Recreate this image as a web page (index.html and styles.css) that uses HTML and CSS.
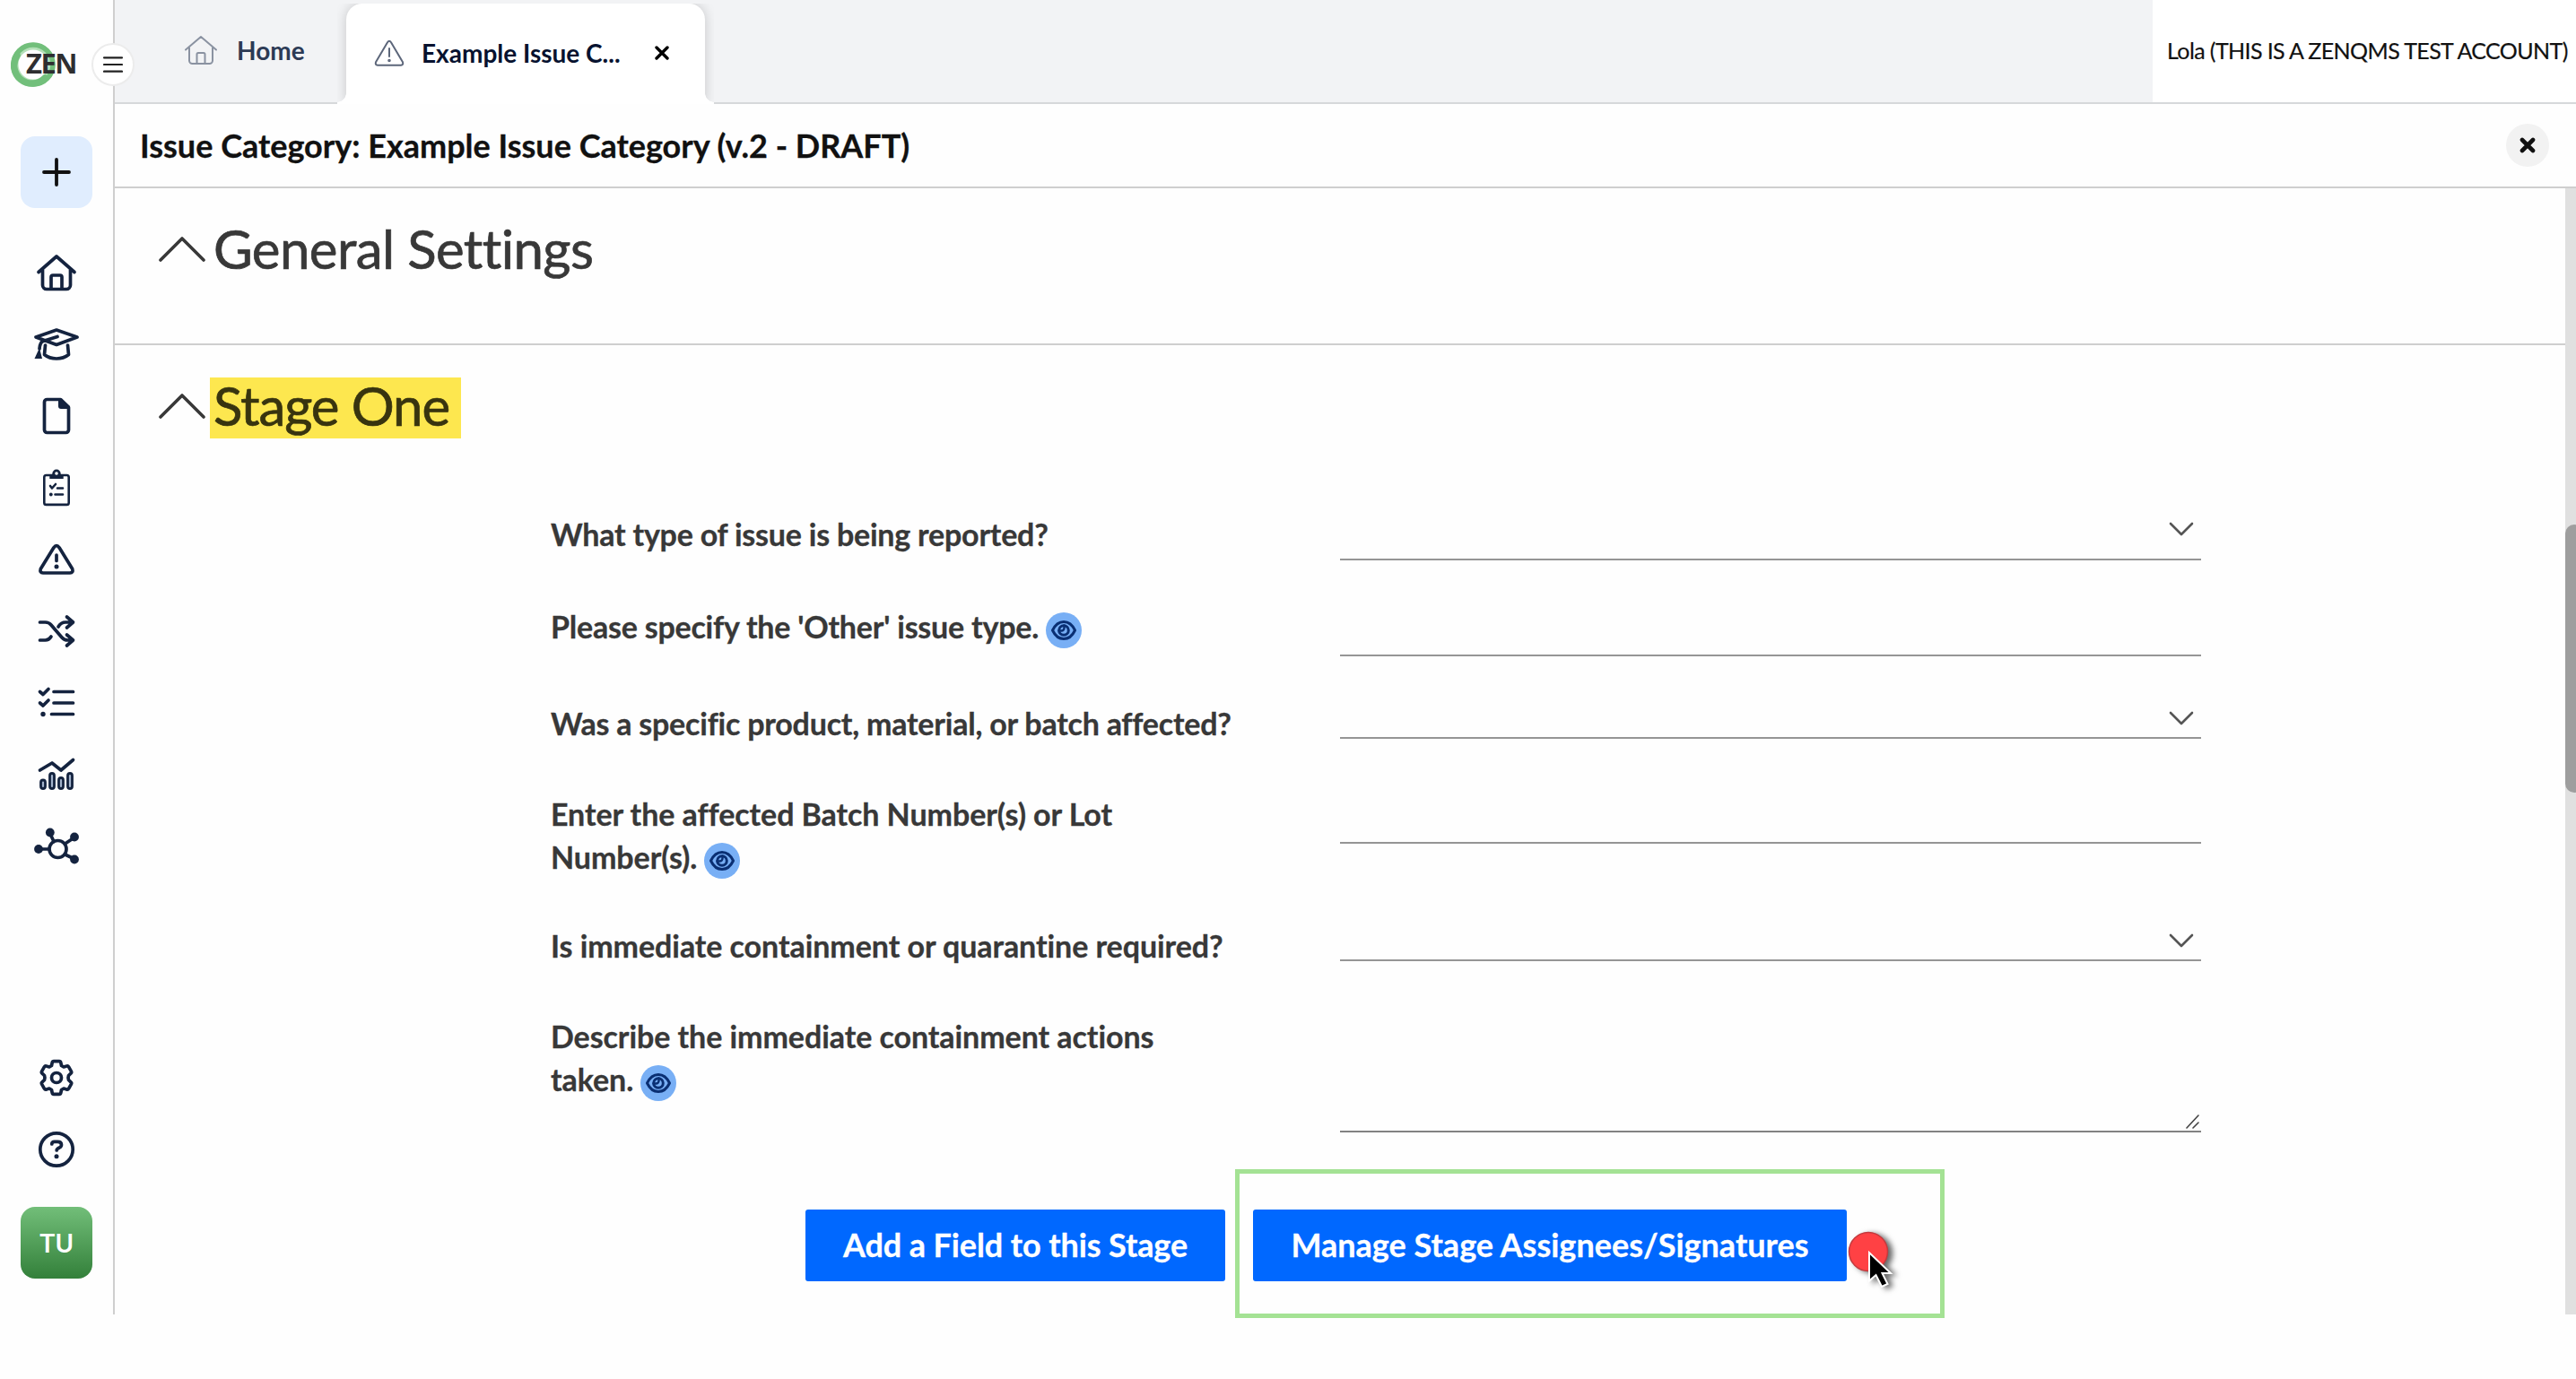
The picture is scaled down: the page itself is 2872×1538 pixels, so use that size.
FILE: index.html
```
<!DOCTYPE html>
<html lang="en">
   <head>
      <meta charset="utf-8">
      <title>Issue Category: Example Issue Category</title>
      <link rel="stylesheet" href="styles.css">
   </head>
   <body>
      <div class="app">
         <nav class="sidebar">
            <div class="logo">
               <svg class="logo-ring" viewBox="0 0 50 50" fill="none">
                  <circle cx="25" cy="25" r="20.500" stroke="#b4e0b8" stroke-width="8"/>
                  <circle cx="25" cy="25" r="22" stroke="#72bf7b" stroke-width="5.500"/>
                  <path d="M38 40A20 20 0 0 1 7 15" stroke="#72bf7b" stroke-width="7.500"/>
               </svg>
               <span class="logo-text">ZEN</span>
            </div>
            <button class="menu-btn">
               <svg width="22" height="18" viewBox="0 0 22 18"><path d="M1 1.3h20M1 9h20M1 16.7h20"/></svg>
            </button>
            <button class="add-btn">
               <svg width="32" height="32" viewBox="0 0 32 32"><path d="M16 2v28M2 16h28"/></svg>
            </button>
            <ul class="nav-list">
               <li><svg width="50" height="44" viewBox="0 0 50 44"><path d="M5 21.500L25 4L45 21.500M9.500 18.500V36a4.500 4.500 0 0 0 4.500 4.500h22a4.500 4.500 0 0 0 4.500-4.500V18.500M19 40V27a2 2 0 0 1 2-2h8a2 2 0 0 1 2 2v13"/></svg></li>
               <li><svg width="50" height="44" viewBox="0 0 50 44"><path d="M25 6L2 14l23 8.500L48 14zM26 13.500L10 18.500Q6.500 20 6 27M12.500 23L11.500 33.500Q17 38 25 38t13.500-4.500L37.500 23"/><path class="solid" d="M6 26l3 12H0.500z"/></svg></li>
               <li><svg width="50" height="44" viewBox="0 0 50 44"><path d="M29.500 3.500H14.500a3 3 0 0 0-3 3v31a3 3 0 0 0 3 3h21a3 3 0 0 0 3-3V12.500z"/><path class="solid" d="M27 2.500h4L40 11v3H30a3 3 0 0 1-3-3z"/></svg></li>
               <li><svg width="50" height="44" viewBox="0 0 50 44"><path class="thin" d="M20 8h-6.500a2.200 2.200 0 0 0-2.200 2.200v28.500a2.200 2.200 0 0 0 2.200 2.200h23a2.200 2.200 0 0 0 2.200-2.200V10.200a2.200 2.200 0 0 0-2.200-2.200H30M18 20l2 2.500 4-4.500M26 22.500h6M23.500 29.500h8.500"/><circle class="solid" cx="18.800" cy="29.500" r="1.900"/><path class="solid" d="M17.300 7h15.400v5H17.300z"/><circle class="solid" cx="25" cy="6.200" r="4.700"/><circle cx="25" cy="6" r="1.800" fill="#fff" stroke="none"/></svg></li>
               <li><svg width="50" height="44" viewBox="0 0 50 44"><path d="M21.900 8.800Q25 4.500 28.100 8.800L42.700 32.500Q44 36.700 40 37H10Q6 36.700 7.300 32.500zM25 17v6.500"/><circle class="solid" cx="25" cy="30" r="2.500"/></svg></li>
               <li><svg width="50" height="44" viewBox="0 0 50 44"><path d="M6.500 12h6q4 0 6.500 3l12 14q2.500 3 6.500 3h6M6.500 32h6q4 0 6.500-4M27 17q3-5 8-5h8M36.500 6l7 6-7 6M36.500 26l7 6-7 6"/></svg></li>
               <li><svg width="50" height="44" viewBox="0 0 50 44"><path d="M6.500 9.500l3.500 3 6-6M6.500 22l3.500 3 6-6M22 9.500h21.500M22 22h21.500M19.500 34.500h24"/><circle class="solid" cx="10" cy="34.500" r="2.700"/></svg></li>
               <li><svg width="50" height="44" viewBox="0 0 50 44"><path d="M6.500 17L20 9l10 8L43.500 5.500"/><g class="bars"><rect x="7.500" y="28" width="5" height="9.500" rx="2.500"/><rect x="17.500" y="20.500" width="5" height="17" rx="2.500"/><rect x="27.500" y="25.500" width="5" height="12" rx="2.500"/><rect x="37.500" y="20.500" width="5" height="17" rx="2.500"/></g></svg></li>
               <li><svg width="50" height="44" viewBox="0 0 50 44"><circle cx="26.500" cy="25" r="9.500"/><path d="M16 25H5M22 16.500L18 8M34.500 19L45 12M34.500 31L45 36"/><g class="solid"><circle cx="5" cy="25" r="4.900"/><circle cx="17.800" cy="6.500" r="4.900"/><circle cx="45" cy="11.500" r="4.900"/><circle cx="45" cy="36.500" r="4.900"/></g></svg></li>
            </ul>
            <ul class="nav-list nav-bottom">
               <li><svg width="50" height="44" viewBox="0 0 50 44"><path d="M22 3.700h6q1.500 0 1.800 1.500l.7 3.300 2.500 1.500 3.300-1q1.500-.5 2.300.9l2.800 4.900q.7 1.300-.4 2.300L38.500 19.500a7 7 0 0 0 0 5l2.500 2.400q1.100 1 .4 2.300l-2.800 4.900q-.8 1.400-2.300.9l-3.300-1-2.500 1.500-.7 3.300q-.3 1.500-1.800 1.500h-6q-1.500 0-1.800-1.500l-.7-3.300L17 34l-3.300 1q-1.500.5-2.300-.9l-2.800-4.900q-.7-1.300.4-2.300l2.500-2.400a7 7 0 0 0 0-5L9 17.100q-1.100-1-.4-2.300l2.800-4.900q.8-1.400 2.300-.9l3.300 1 2.500-1.500.7-3.300Q20.500 3.700 22 3.700z"/><circle cx="25" cy="22" r="5.500"/></svg></li>
               <li><svg width="50" height="44" viewBox="0 0 50 44"><circle cx="25" cy="22" r="18.200"/><path d="M19.800 16q0-2.700 3-2.700h3.400q4.300 0 4.300 3.400 0 2-2.300 3.300-3 1.500-3 3"/><circle class="solid" cx="25" cy="29.800" r="2.500"/></svg></li>
            </ul>
            <div class="avatar">TU</div>
         </nav>
         <div class="main">
            <div class="topbar">
               <div class="tab">
                  <svg width="38" height="34" viewBox="0 0 38 34"><path d="M2 16.500L19 2l17 14.500M6 14v14.500a3.500 3.500 0 0 0 3.500 3.500h19a3.500 3.500 0 0 0 3.500-3.500V14M14.500 32V21.500a1.500 1.500 0 0 1 1.500-1.500h6a1.500 1.500 0 0 1 1.500 1.500V32"/></svg>
                  <span>Home</span>
               </div>
               <div class="tab active">
                  <svg width="34" height="30" viewBox="0 0 34 30"><path d="M15 3.200q2-3 4 0l13 22q1 3.300-2 3.500H4q-3-.2-2-3.500zM17 10v9"/><circle cx="17" cy="23.500" r=".8"/></svg>
                  <span class="tab-name">Example Issue C...</span>
                  <svg class="tab-close" width="16" height="16" viewBox="0 0 16 16"><path d="M2 2l12 12M14 2L2 14"/></svg>
               </div>
               <div class="account">Lola (THIS IS A ZENQMS TEST ACCOUNT)</div>
            </div>
            <div class="page-header">
               <h1>Issue Category: Example Issue Category (v.2 - DRAFT)</h1>
               <button class="close-btn">
                  <svg width="18" height="18" viewBox="0 0 18 18"><path d="M3 3l12 12M15 3L3 15"/></svg>
               </button>
            </div>
            <div class="content">
               <div class="section general">
                  <h2>
                     <svg class="caret" width="52" height="30" viewBox="0 0 52 30"><path d="M2 27L26 3L50 27"/></svg>
                     <span>General Settings</span>
                  </h2>
               </div>
               <div class="section">
                  <h2>
                     <svg class="caret" width="52" height="30" viewBox="0 0 52 30"><path d="M2 27L26 3L50 27"/></svg>
                     <mark>Stage One</mark>
                  </h2>
                  <div class="form">
                     <label>What type of issue is being reported?</label>
                     <div class="field select h-53"><svg width="28" height="18" viewBox="0 0 28 18"><path d="M2 3l12 12L26 3"/></svg></div>

                     <label>Please specify the 'Other' issue type. <svg class="eye" viewBox="0 0 40 40"><circle cx="20" cy="20" r="20"/><path d="M7.500 20Q12 10.500 20 10.500T32.500 20Q28 29.500 20 29.500T7.500 20z"/><circle class="iris" cx="20" cy="20" r="5.300"/><path class="glint" d="M20.500 14.500v3a3 3 0 0 1-3 3h-3"/></svg></label>
                     <div class="field h-57"></div>

                     <label>Was a specific product, material, or batch affected?</label>
                     <div class="field select h-41"><svg width="28" height="18" viewBox="0 0 28 18"><path d="M2 3l12 12L26 3"/></svg></div>

                     <label class="loose">Enter the affected Batch Number(s) or Lot Number(s). <svg class="eye" viewBox="0 0 40 40"><circle cx="20" cy="20" r="20"/><path d="M7.500 20Q12 10.500 20 10.500T32.500 20Q28 29.500 20 29.500T7.500 20z"/><circle class="iris" cx="20" cy="20" r="5.300"/><path class="glint" d="M20.500 14.500v3a3 3 0 0 1-3 3h-3"/></svg></label>
                     <div class="field h-57"></div>

                     <label class="loose">Is immediate containment or quarantine required?</label>
                     <div class="field select h-41"><svg width="28" height="18" viewBox="0 0 28 18"><path d="M2 3l12 12L26 3"/></svg></div>

                     <label class="loose">Describe the immediate containment actions taken. <svg class="eye" viewBox="0 0 40 40"><circle cx="20" cy="20" r="20"/><path d="M7.500 20Q12 10.500 20 10.500T32.500 20Q28 29.500 20 29.500T7.500 20z"/><circle class="iris" cx="20" cy="20" r="5.300"/><path class="glint" d="M20.500 14.500v3a3 3 0 0 1-3 3h-3"/></svg></label>
                     <div class="field textarea"><svg width="15" height="16" viewBox="0 0 15 16"><path d="M1 15L14 1M8 15l6-6"/></svg></div>
                  </div>
                  <div class="actions">
                     <button class="btn add-field">Add a Field to this Stage</button>
                     <div class="highlighted">
                        <button class="btn manage">Manage Stage Assignees/Signatures</button>
                        <div class="outline"></div>
                        <svg class="pointer" width="70" height="80" viewBox="0 0 70 80">
                           <circle cx="25" cy="25" r="21.500"/>
                           <path d="M26 26V57.500L33.500 51L40 64L46.500 61L40.500 49H50z"/>
                        </svg>
                     </div>
                  </div>
               </div>
               <div class="scrollbar"><div class="thumb"></div></div>
            </div>
         </div>
      </div>
   </body>
</html>
```
FILE: styles.css
```
* {
margin: 0;
padding: 0;
box-sizing: border-box;
}
body {
min-height: 1538px;
font-family: 'Lato', sans-serif;
background: #fefefe;
color: #383838;
}
button {
border: none;
font-family: inherit;
cursor: pointer;
}
svg {
display: block;
flex: none;
fill: none;
stroke-linecap: round;
stroke-linejoin: round;
}
.app {
display: flex;
height: 1466px;
}

/* sidebar */
.sidebar {
position: relative;
display: flex;
flex-direction: column;
align-items: center;
width: 128px;
padding-top: 47px;
padding-bottom: 40px;
border-right: 2px solid #cfcfcf;
}
.logo {
position: relative;
align-self: flex-start;
width: 50px;
height: 50px;
margin-left: 12px;
}
.logo-text {
position: absolute;
left: 17px;
top: 5px;
font-family: 'Open Sans', sans-serif;
font-size: 31px;
line-height: 36px;
font-weight: 700;
letter-spacing: -1.5px;
color: #2e2e30;
}
.menu-btn {
position: absolute;
left: 102px;
top: 48px;
z-index: 2;
display: flex;
align-items: center;
justify-content: center;
width: 48px;
height: 48px;
border: 2px solid #ececec;
border-radius: 50%;
background: #fff;
}
.menu-btn svg {
stroke: #222;
stroke-width: 2.2;
}
.add-btn {
display: flex;
align-items: center;
justify-content: center;
width: 80px;
height: 80px;
margin-top: 55px;
border-radius: 16px;
background: #e0edfe;
}
.add-btn svg {
stroke: #111;
stroke-width: 3.8;
}
.nav-list {
display: flex;
flex-direction: column;
gap: 36px;
margin-top: 50px;
list-style: none;
}
.nav-list svg {
stroke: #14233f;
stroke-width: 3.7;
}
.nav-list .thin {
stroke-width: 2.6;
}
.nav-list .solid {
fill: #14233f;
stroke: none;
}
.nav-list .bars {
fill: #a3b3cc;
stroke-width: 2.8;
}
.nav-bottom {
margin-top: auto;
}
.avatar {
width: 80px;
height: 80px;
margin-top: 42px;
padding-right: 1px;
border-radius: 16px;
background: linear-gradient(#72be79, #33803a);
color: #fff;
font-family: 'Inter', sans-serif;
font-size: 28px;
font-weight: 600;
line-height: 82px;
letter-spacing: -0.5px;
text-align: center;
}

/* tabs */
.main {
flex: 1;
min-width: 0;
display: flex;
flex-direction: column;
}
.topbar {
display: flex;
height: 116px;
background: #f2f3f5;
border-bottom: 2px solid #d6d8da;
}
.tab {
display: flex;
align-items: center;
width: 258px;
padding-left: 77px;
padding-bottom: 2px;
gap: 21px;
font-size: 28px;
font-weight: 700;
color: #2c3a55;
}
.tab svg {
stroke: #8a92a1;
stroke-width: 2;
}
.tab.active {
position: relative;
width: 400px;
height: 112px;
margin-top: 4px;
padding: 0 0 2px 31px;
gap: 19px;
border-radius: 18px 18px 0 0;
background: #fff;
color: #07122f;
box-shadow: 0 0 14px rgba(0, 0, 0, 0.18);
clip-path: inset(0 -10px 0 -10px);
}
.tab.active::before,
.tab.active::after {
content: "";
position: absolute;
bottom: 0;
width: 10px;
height: 12px;
background: radial-gradient(circle at 0 0, transparent 9.5px, #fff 10px);
}
.tab.active::before {
left: -10px;
}
.tab.active::after {
right: -10px;
transform: scaleX(-1);
}
.tab.active svg {
stroke: #5c667a;
}
.tab .tab-name {
width: 222px;
white-space: nowrap;
}
.tab.active .tab-close {
margin-left: 19px;
stroke: #000;
stroke-width: 3.4;
}
.account {
width: 472px;
margin-left: auto;
padding-left: 16px;
background: #fff;
color: #111;
font-size: 25px;
line-height: 113px;
letter-spacing: -0.6px;
white-space: nowrap;
-webkit-text-stroke: 0.2px;
}
.page-header {
display: flex;
align-items: center;
justify-content: space-between;
height: 94px;
padding: 0 30px 0 28px;
border-bottom: 2px solid #cfcfcf;
}
.page-header h1 {
font-size: 36px;
font-weight: 700;
color: #111;
-webkit-text-stroke: 0.3px;
}
.close-btn {
display: flex;
align-items: center;
justify-content: center;
width: 48px;
height: 48px;
border-radius: 50%;
background: #f2f2f2;
}
.close-btn svg {
stroke: #111;
stroke-width: 4.6;
}

/* sections */
.content {
position: relative;
flex: 1;
}
.section {
padding: 36px 0 0 49px;
}
.section.general {
height: 175px;
border-bottom: 2px solid #cfcfcf;
}
.section h2 {
display: flex;
align-items: center;
font-size: 60px;
font-weight: 400;
line-height: 62px;
letter-spacing: -0.6px;
-webkit-text-stroke: 0.7px;
}
.section h2 span,
.section h2 mark {
margin-left: 5px;
padding: 0 13px 6px 4px;
color: inherit;
}
.section h2 mark {
background: #fde74f;
color: #38340f;
letter-spacing: -1.1px;
}
.caret {
margin-top: -4px;
stroke: #383838;
stroke-width: 3.6;
}
.form {
display: grid;
grid-template-columns: 880px 960px;
grid-template-rows: 103px 108px 101px 147px 101px 217px;
margin: 83px 0 0 437px;
}
.form label {
max-width: 767px;
font-size: 34px;
font-weight: 700;
line-height: 48px;
letter-spacing: -0.22px;
-webkit-text-stroke: 0.3px;
}
.form .loose {
letter-spacing: -0.07px;
}
.eye {
display: inline-block;
width: 40px;
height: 40px;
margin: -6px 0;
vertical-align: -5px;
fill: #78aff5;
}
.eye path,
.eye .iris {
stroke: #0a2f73;
stroke-width: 3;
}
.eye .glint {
fill: none;
stroke-width: 2.4;
}
.field {
border-bottom: 2px solid #959595;
}
.h-41 {
height: 41px;
}
.h-53 {
height: 53px;
}
.h-57 {
height: 57px;
}
.select {
display: flex;
justify-content: flex-end;
padding: 9px 8px 0 0;
}
.select svg {
stroke: #555;
stroke-width: 2.6;
}
.textarea {
display: flex;
align-items: flex-end;
justify-content: flex-end;
height: 131px;
padding: 0 2px 2px 0;
border-color: #828282;
}
.textarea svg {
stroke: #444;
stroke-width: 1.6;
}
.actions {
display: flex;
gap: 31px;
margin-left: 721px;
}
.btn {
height: 80px;
padding-bottom: 2px;
border-radius: 3px;
background: #0068ff;
color: #fff;
font-size: 36px;
font-weight: 700;
white-space: nowrap;
-webkit-text-stroke: 0.3px;
}
.add-field {
width: 468px;
letter-spacing: -0.1px;
}
.manage {
width: 662px;
}

/* callout around the manage button */
.highlighted {
position: relative;
}
.outline {
position: absolute;
left: -20px;
top: -45px;
width: 791px;
height: 166px;
border: 5px solid #a4e294;
}
.pointer {
position: absolute;
left: 661px;
top: 22px;
filter: drop-shadow(5px 2px 3px rgba(0, 0, 0, 0.6));
}
.pointer circle {
fill: #ff4144;
stroke: #c43a3e;
stroke-width: 1.5;
}
.pointer path {
fill: #000;
stroke: #fff;
stroke-width: 2;
stroke-linejoin: miter;
}

.scrollbar {
position: absolute;
right: 0;
top: 0;
bottom: 0;
width: 12px;
padding-top: 375px;
background: #e0e0e0;
overflow: hidden;
}
.thumb {
width: 20px;
height: 299px;
border-radius: 10px;
background: #9e9e9e;
}
```
